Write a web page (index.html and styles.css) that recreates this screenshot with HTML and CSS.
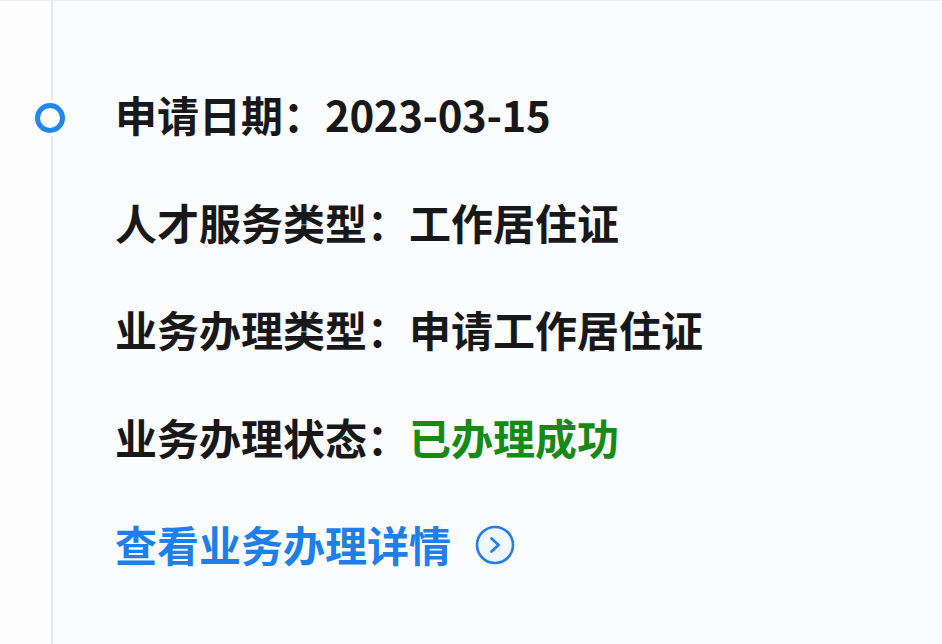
FILE: index.html
```html
<!DOCTYPE html>
<html lang="zh-CN">
<head>
    <meta charset="UTF-8">
    <meta name="viewport" content="width=device-width, initial-scale=1.0">
    <title>业务办理进度</title>
    <link rel="stylesheet" href="styles.css">
</head>
<body>
    <div class="timeline">
        <!-- Left rail with the step marker -->
        <div class="timeline-rail">
            <span class="timeline-dot"></span>
        </div>

        <!-- Step details -->
        <div class="timeline-body">
            <p class="row"><span class="label">申请日期：</span><span class="value date">2023-03-15</span></p>
            <p class="row"><span class="label">人才服务类型：</span><span class="value">工作居住证</span></p>
            <p class="row"><span class="label">业务办理类型：</span><span class="value">申请工作居住证</span></p>
            <p class="row"><span class="label">业务办理状态：</span><span class="value status-success">已办理成功</span></p>
            <a class="detail-link" href="#">
                查看业务办理详情
                <svg class="detail-icon" width="40" height="40" viewBox="0 0 40 40" aria-hidden="true">
                    <circle cx="20" cy="20" r="18" fill="#f1f7fe" stroke="#1e7fe8" stroke-width="2.6"/>
                    <path d="M16.5 13.5 L23.5 20 L16.5 26.5" fill="none" stroke="#1e7fe8" stroke-width="2.8" stroke-linecap="round" stroke-linejoin="round"/>
                </svg>
            </a>
        </div>
    </div>
</body>
</html>
```

FILE: styles.css
```css
body {
    margin: 0;
    background-color: #fbfcfe;
    font-family: "Noto Sans CJK SC", "Noto Sans", sans-serif;
    color: #18181a;
}

.timeline {
    display: flex;
    height: 644px;
    border-top: 1px solid #eceef1;
    box-sizing: border-box;
}

.timeline-rail {
    position: relative;
    width: 51px;
    flex-shrink: 0;
    border-right: 2px solid #e4e7eb;
    background-color: #fdfdfe;
}

.timeline-dot {
    position: absolute;
    top: 102px;
    left: 35px;
    width: 20px;
    height: 20px;
    border: 5px solid #1e88f0;
    border-radius: 50%;
    background-color: #fff;
    box-shadow: 0 0 0 3px #fbfcfe;
}

.timeline-body {
    padding: 59px 0 0 62px;
}

.row {
    margin: 0;
    font-size: 42px;
    font-weight: 700;
    line-height: 107.5px;
    white-space: nowrap;
}

.date {
    letter-spacing: -0.4px;
}

.status-success {
    color: #168a16;
}

.detail-link {
    display: flex;
    align-items: center;
    gap: 24px;
    height: 107.5px;
    font-size: 42px;
    font-weight: 700;
    color: #1e7fe8;
    text-decoration: none;
}

.detail-icon {
    flex-shrink: 0;
    margin-top: 2px;
}
```
